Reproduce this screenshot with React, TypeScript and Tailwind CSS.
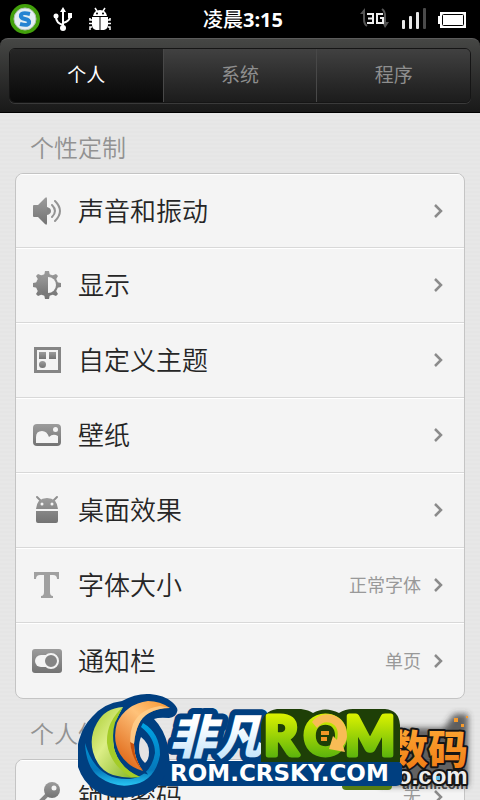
import { useState, ReactNode } from "react";

interface Setting {
  label: string;
  icon: ReactNode;
  value?: string;
}

const TABS = ["个人", "系统", "程序"];

const GREY = "url(#icon-grey)";

const PERSONAL: Setting[] = [
  {
    label: "声音和振动",
    icon: (
      <>
        <path d="M2 11h4l7-7q2-2 2 1v24q0 3-2 1l-7-7H2q-1 0-1-1V12q0-1 1-1z" fill={GREY} />
        <path d="M15 13q4 1 4 4t-4 4z" fill="#858585" />
        <path d="M20 11q6 6 0 12M23 7q10 10 0 20" fill="none" stroke="#949494" strokeWidth="2" strokeLinecap="round" />
      </>
    ),
  },
  {
    label: "显示",
    icon: (
      <>
        <g fill={GREY}>
          <circle cx="15" cy="17" r="11" />
          <path d="M13 3h4l1 5h-6zM13 31h4l1-5h-6zM1 15v4l5 1v-6zM29 15v4l-5 1v-6zM4 8l2-2 5 2-4 5zM26 8l-2-2-5 2 4 5zM4 26l2 2 5-2-4-5zM26 26l-2 2-5-2 4-5z" />
        </g>
        <path d="M16 9a8 8 0 0 1 0 16z" fill="#f4f4f4" />
      </>
    ),
  },
  {
    label: "自定义主题",
    icon: (
      <>
        <rect x="3.500" y="5.500" width="24" height="23" fill="none" stroke="#858585" strokeWidth="3" />
        <g fill={GREY}>
          <rect x="7" y="9" width="7" height="7" />
          <rect x="17" y="9" width="7" height="7" />
          <circle cx="10.500" cy="21.500" r="3.500" />
        </g>
      </>
    ),
  },
  {
    label: "壁纸",
    icon: (
      <>
        <rect x="1" y="6" width="28" height="22" rx="4" fill={GREY} />
        <path d="M4 25v-6q0-6 6-6 5 0 7 6 4-4 9-1v7z" fill="#f4f4f4" />
        <circle cx="23.500" cy="11.500" r="2.500" fill="#f4f4f4" />
      </>
    ),
  },
  {
    label: "桌面效果",
    icon: (
      <>
        <path d="M5 4l4 4M25 4l-4 4" stroke="#8f8f8f" strokeWidth="2" strokeLinecap="round" />
        <path d="M4 16q1-11 11-11t11 11zM4 18h22v10q0 2-2 2H6q-2 0-2-2z" fill={GREY} />
        <circle cx="10" cy="11" r="1.500" fill="#f4f4f4" />
        <circle cx="20" cy="11" r="1.500" fill="#f4f4f4" />
      </>
    ),
  },
  {
    label: "字体大小",
    value: "正常字体",
    icon: (
      <path d="M2 4h25v7h-2q0-4-4-4h-3v17q0 4 3 4v2H9v-2q3 0 3-4V7H8q-4 0-4 4H2z" fill="#a0a0a0" />
    ),
  },
  {
    label: "通知栏",
    value: "单页",
    icon: (
      <>
        <rect x="0" y="5" width="30" height="24" rx="3" fill={GREY} />
        <rect x="3" y="11" width="20" height="12" rx="6" fill="#f4f4f4" />
        <circle cx="19" cy="17" r="7" fill="#858585" stroke="#f4f4f4" strokeWidth="2" />
      </>
    ),
  },
];

const PRIVACY: Setting[] = [
  {
    label: "锁屏密码",
    value: "无",
    icon: (
      <>
        <path d="M18 12L4 26M9 22l4 4" stroke="#858585" strokeWidth="4" />
        <circle cx="20" cy="10" r="8" fill={GREY} />
        <circle cx="22" cy="8" r="2.500" fill="#f4f4f4" />
      </>
    ),
  },
];

function StatusBar() {
  return (
    <div className="relative flex h-[38px] shrink-0 items-center justify-between bg-black px-2.5">
      <div className="flex items-center gap-3">
        <svg width="30" height="30" viewBox="0 0 30 30" aria-hidden="true">
          <circle cx="15" cy="15" r="13" fill="#e4eef2" stroke="#42a00b" strokeWidth="4" />
          <circle cx="15" cy="15" r="11" fill="none" stroke="#b5bfb7" />
          <path d="M20 10q-8-2-9 1t4 4q5 1 4 4t-9 1" fill="none" stroke="#2584d2" strokeWidth="4" />
        </svg>
        <svg width="22" height="26" viewBox="0 0 22 26" fill="none" stroke="#fff" strokeWidth="2" aria-hidden="true">
          <path d="M11 22V4M11 19q-7-2-7-8M11 17q7-2 7-7" />
          <path d="M11 1l3 5H8z" fill="#fff" stroke="none" />
          <circle cx="11" cy="22" r="3" fill="#fff" stroke="none" />
          <circle cx="4" cy="10" r="2.500" fill="#fff" stroke="none" />
          <path d="M16 7h4v5h-4z" fill="#fff" stroke="none" />
        </svg>
        <svg width="24" height="24" viewBox="0 0 24 24" fill="#fff" className="ml-0.5" aria-hidden="true">
          <path d="M7 1l2 3M17 1l-2 3M4 13H2v-2M4 16.500H1M4 20H2v3M20 13h2v-2M20 16.500h3M20 20h2v3" fill="none" stroke="#fff" strokeWidth="1.500" />
          <path d="M5 9q1-6 7-6t7 6zM4 10h7.500v13H8q-4-1-4-5zM12.500 10H20v8q0 4-4 5h-3.500z" />
          <circle cx="9" cy="6.500" r="1" fill="#000" />
          <circle cx="15" cy="6.500" r="1" fill="#000" />
        </svg>
      </div>
      <time className="absolute inset-x-0 top-1.5 pl-1.5 text-center text-xl leading-7 font-bold text-white">
        <span className="font-medium">凌晨</span>3:15
      </time>
      <svg width="108" height="24" viewBox="0 0 108 24" className="mr-1" aria-hidden="true">
        <path d="M6 3v9q0 5 3 7M24 2q3 2 3 7v9" fill="none" stroke="#555" strokeWidth="2" />
        <path d="M2 7l5-6v6zM24 15h7l-4 6z" fill="#555" />
        <path d="M9 7h6v9H9M10 11.500h5M25 7h-6v9h6v-5h-3" fill="none" stroke="#eee" strokeWidth="2" />
        <g fill="#e8e8e8">
          <rect x="44" y="13" width="3" height="9" rx="1" />
          <rect x="51" y="9" width="3" height="13" rx="1" />
          <rect x="58" y="5" width="3" height="17" rx="1" />
          <rect x="65" y="1" width="3" height="21" rx="1" fill="#4a4a4a" />
        </g>
        <path d="M82 5h26v16H82v-4h-2V9h2z" fill="#fff" />
        <rect x="84.500" y="7.500" width="21" height="11" rx="1" fill="none" stroke="#000" />
      </svg>
    </div>
  );
}

function Chevron() {
  return (
    <svg width="10" height="14" viewBox="0 0 10 14" className="shrink-0" aria-hidden="true">
      <path d="M1 1l6 6-6 6" fill="none" stroke="#8b8b8b" strokeWidth="2.500" />
    </svg>
  );
}

function Section({ title, items }: { title: string; items: Setting[] }) {
  return (
    <section className="px-[15px]">
      <h2 className="px-[15px] pt-[17px] pb-[7px] text-2xl leading-9 font-[350] text-[#929292]">{title}</h2>
      <ul className="overflow-hidden rounded-lg border border-[#c4c4c4] bg-[#f4f4f4]">
        {items.map((item) => (
          <li
            key={item.label}
            className="h-[75px] border-b border-[#d8d8d8] first:h-[74px] last:border-b-0"
          >
            <button type="button" className="flex h-full w-full items-center border-t border-white pr-5 pb-px pl-4 text-left">
              <svg width="30" height="34" viewBox="0 0 30 34" className="shrink-0" aria-hidden="true">
                {item.icon}
              </svg>
              <span className="ml-4 flex-1 text-[26px] leading-9 font-[350] text-[#262626]">{item.label}</span>
              {item.value && <span className="mr-[13px] text-lg text-[#999]">{item.value}</span>}
              <Chevron />
            </button>
          </li>
        ))}
      </ul>
    </section>
  );
}

function ShumaLogo() {
  return (
    <g>
      <defs>
        <linearGradient id="shuma" x1="0" y1="0" x2="0" y2="1">
          <stop offset="0" stopColor="#ffab36" />
          <stop offset="1" stopColor="#ee7711" />
        </linearGradient>
        <filter id="soft" x="-20%" y="-20%" width="140%" height="140%">
          <feGaussianBlur stdDeviation="3" />
        </filter>
      </defs>
      <path d="M380 728h64l10-14h14v72h-88z" fill="#333" opacity="0.75" filter="url(#soft)" />
      <rect x="342" y="770" width="50" height="20" rx="4" fill="#567d12" />
      <text x="402" y="789" fontSize="13" fontWeight="700" fill="#444">anzhi.com</text>
      <g stroke="#151515" strokeWidth="4" strokeLinejoin="round" paintOrder="stroke">
        <text x="388" y="764" fontSize="40" fontWeight="900" fill="url(#shuma)">数码</text>
        <text x="397" y="784" fontSize="24" fontWeight="700" fill="#eee" className="font-['Liberation_Sans',sans-serif]">o.com</text>
      </g>
      <path d="M454 718h4v4h-4zM461 724h3v3h-3zM466 716h2v2h-2z" fill="#f69a2b" />
      <rect x="436" y="776" width="4" height="4" fill="#62bdea" />
    </g>
  );
}

function CrskyLogo() {
  return (
    <g>
      <defs>
        <linearGradient id="ice" x1="0" y1="0" x2="0" y2="1">
          <stop offset="0.300" stopColor="#fff" />
          <stop offset="1" stopColor="#b5dffa" />
        </linearGradient>
        <linearGradient id="lime" gradientUnits="userSpaceOnUse" x1="0" y1="715" x2="0" y2="757">
          <stop offset="0" stopColor="#d8f000" />
          <stop offset="1" stopColor="#5cb40c" />
        </linearGradient>
        <linearGradient id="leaf" x1="0" y1="0" x2="1" y2="1">
          <stop offset="0" stopColor="#a6ca2c" />
          <stop offset="0.400" stopColor="#dcee86" />
          <stop offset="1" stopColor="#7ab01a" />
        </linearGradient>
        <linearGradient id="flame" x1="1" y1="0" x2="0.300" y2="1">
          <stop offset="0" stopColor="#f8962e" />
          <stop offset="0.400" stopColor="#ffc27a" />
          <stop offset="1" stopColor="#e06a1a" />
        </linearGradient>
        <linearGradient id="sea" x1="0" y1="0" x2="0" y2="1">
          <stop offset="0" stopColor="#00a4e3" />
          <stop offset="0.750" stopColor="#0578bb" />
          <stop offset="1" stopColor="#28c5f2" />
        </linearGradient>
      </defs>

      {/* navy backing */}
      <rect x="155" y="761" width="247" height="25" rx="6" fill="#003f80" />
      <path d="M79 740q4-14 13-23 12-14 30-16 14-8 28-7 14 1 22 8 7 6 5 10-1 5-8 6-10-1-15 1 10 10 14 27l2 20-10 18q-8 9-19 11-12 3-23 2-14 0-23-7-12-8-17-23-3-12 1-27z" fill="#003f80" />

      {/* swirl */}
      <path d="M85 743q1 24 14 34 16 11 32 8 24-3 29-30 0-22-17-32l-2 4q14 11 14 26-4 23-25 26-34 2-45-36z" fill="url(#sea)" />
      <path d="M123 707q-18 1-26 16-8 14-4 29 5 18 20 23 14 4 27 2-21-9-26-29-3-22 9-41z" fill="url(#leaf)" />
      <path d="M123 707q-17 15-16 36 3 22 24 34l9 0q-21-9-26-29-3-22 9-41z" fill="#a4cc28" />
      <path d="M170 708q-10-7-22-7-22 3-31 22-5 17 3 31 8 13 23 17-9-12-9-27 2-24 15-31 9-5 21-5z" fill="url(#flame)" stroke="#003f80" strokeWidth="4" paintOrder="stroke" />
      <path d="M160 706q-20 3-27 18-5 14-1 27 4 12 11 20-9-12-9-27 2-24 15-31 9-5 21-5z" fill="#ffd18f" opacity="0.8" />
      <path d="M130 742q2 18 13 29-9-12-9-27z" fill="#c9500b" />
      <path d="M141 737q8 6 8 15 0 8-4 11-6-5-6-14 0-8 2-12z" fill="#e3e3e3" />

      <text x="169" y="754" fontSize="47" fontWeight="900" fontStyle="italic" fill="url(#ice)" stroke="#003f80" strokeWidth="12" strokeLinejoin="round" paintOrder="stroke">
        非凡
      </text>

      <path d="M261 725q2-14 16-16h24q8 1 12 4 12-7 26 0 6-4 14-4h32q14 1 15 16v37H261z" fill="#1e3f07" />
      <g
        fontSize="53"
        fontWeight="700"
        fill="url(#lime)"
        stroke="url(#lime)"
        strokeWidth="5"
        strokeLinejoin="round"
        className="font-[Lato,sans-serif]"
      >
        <text x="264" y="755">R</text>
        <text x="304" y="755">O</text>
        <text x="345" y="755">M</text>
      </g>
      <path d="M312 722q8-10 21-7 14 5 14 22-1 6-4 9l2 6-16-3 4-13 4 4q3-13-6-17-8-3-14 5z" fill="#f8bc55" />
      <path d="M321 731h8v4h-8zM321 737h6v4h-6z" fill="#f19626" />

      <rect x="165" y="762" width="237" height="23" rx="5" fill="#003f80" />
      <text x="170" y="781" fontSize="23" fontWeight="700" fill="#fff" className="font-['DejaVu_Sans',sans-serif]">
        ROM.CRSKY.COM
      </text>
    </g>
  );
}

export default function App() {
  const [active, setActive] = useState(0);

  return (
    <div
      lang="zh-CN"
      className="relative flex h-screen flex-col overflow-hidden bg-[#e6e6e6] font-['Open_Sans','Noto_Sans_CJK_SC',sans-serif]"
    >
      <svg width="0" height="0" className="absolute" aria-hidden="true">
        <linearGradient id="icon-grey" x1="0" y1="0" x2="0" y2="1">
          <stop offset="0" stopColor="#9c9c9c" />
          <stop offset="1" stopColor="#737373" />
        </linearGradient>
      </svg>

      <StatusBar />

      <header className="shrink-0 bg-black">
        <div className="rounded-t-lg border-t border-b border-t-[#5c5c5c] border-b-black bg-linear-to-b from-[#464745] to-[#191919] px-[9px] pt-[9px] pb-[9px]">
          <div role="tablist" className="flex h-[55px] overflow-hidden rounded-md border border-[#151515] shadow-[0_1px_0_#3a3a3a]">
            {TABS.map((tab, i) => (
              <button
                key={tab}
                type="button"
                role="tab"
                aria-selected={i === active}
                onClick={() => setActive(i)}
                className={
                  i === active
                    ? "flex-1 bg-linear-to-b from-[#262626] to-[#090909] text-[19px] text-white"
                    : "flex-1 border-l border-[#484848] bg-linear-to-b from-[#414141] to-[#1c1c1c] text-[19px] text-[#8e8e8e]"
                }
              >
                {tab}
              </button>
            ))}
          </div>
        </div>
      </header>

      <main className="min-h-0 flex-1 overflow-hidden bg-[repeating-linear-gradient(#e7e7e7_0_2px,#e5e5e5_2px_4px)]">
        <Section title="个性定制" items={PERSONAL} />
        <Section title="个人信息" items={PRIVACY} />
      </main>

      <svg
        viewBox="78 690 402 110"
        className="pointer-events-none absolute right-0 bottom-0 h-[110px] w-[402px]"
        aria-hidden="true"
      >
        <ShumaLogo />
        <CrskyLogo />
      </svg>
    </div>
  );
}
